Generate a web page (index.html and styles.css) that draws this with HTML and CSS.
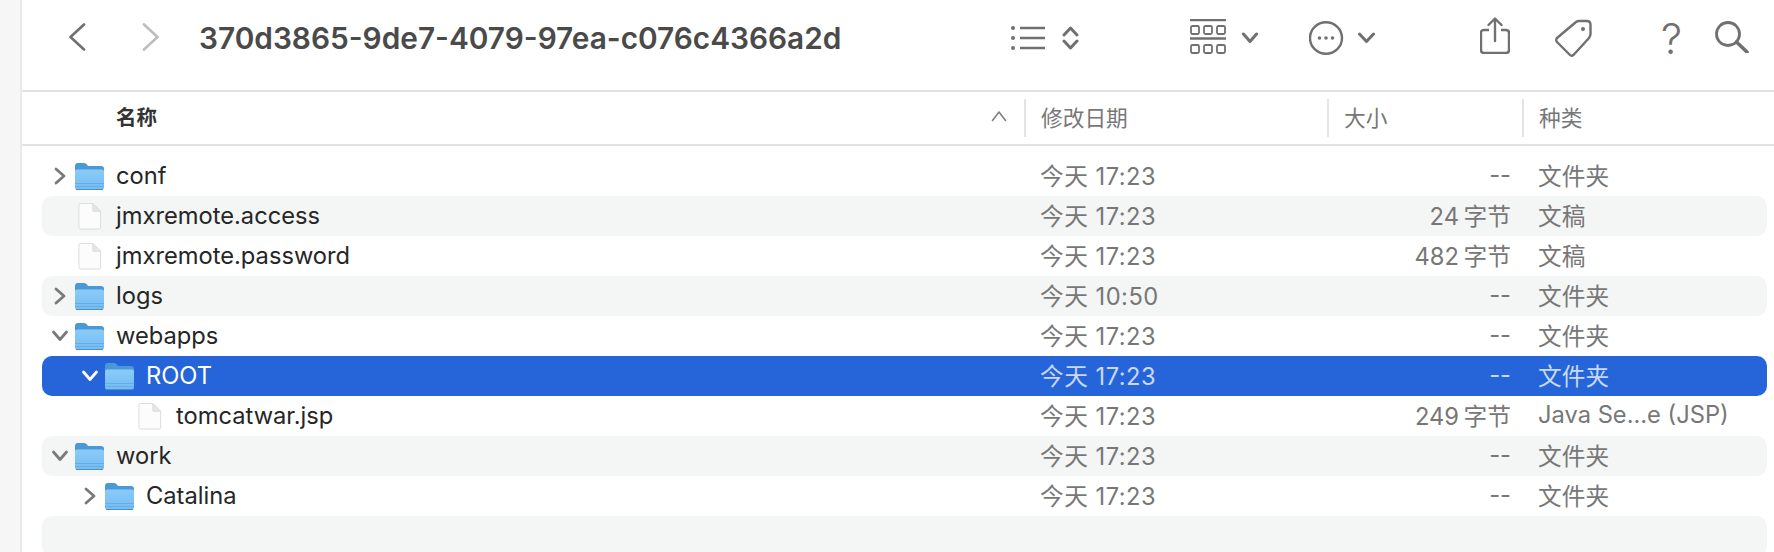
FILE: index.html
```html
<!DOCTYPE html>
<html lang="zh-CN">
<head>
    <meta charset="UTF-8">
    <title>370d3865-9de7-4079-97ea-c076c4366a2d</title>
    <link rel="stylesheet" href="styles.css">
</head>
<body>
    <svg class="defs" width="0" height="0">
        <defs>
            <linearGradient id="folder-body" x1="0" y1="0" x2="0" y2="1">
                <stop offset="0" stop-color="#8acbf8"/>
                <stop offset="1" stop-color="#74bcf2"/>
            </linearGradient>
            <symbol id="folder" viewBox="0 0 29 27">
                <path d="M0 3 Q0 0 3 0 H9 Q11 0 12 1.500 L13 3 H26 Q29 3 29 6 V12 H0 Z" fill="#4a98d6"/>
                <path d="M0 8 Q0 6.500 2 6.500 H27 Q29 6.500 29 8 V24 Q29 27 26 27 H3 Q0 27 0 24 Z" fill="url(#folder-body)"/>
                <path d="M0 20.500 H29 M0 23.500 H29" stroke="#68aee6" stroke-width="1"/>
                <path d="M1 26.500 H28" stroke="#4e8fc6" stroke-width="1"/>
            </symbol>
            <symbol id="file" viewBox="0 0 25 28">
                <path d="M1.500 2 Q1.500 .5 3 .5 H16 L24 8.500 V25.500 Q24 27 22.500 27 H3 Q1.500 27 1.500 25.500 Z" fill="#fcfcfc" stroke="#dcdcdc"/>
                <path d="M16 .5 V8.500 H24 Z" fill="#e6e6e6" stroke="#dcdcdc"/>
            </symbol>
            <symbol id="chev-right" viewBox="0 0 12 18">
                <path d="M2 2 L10 9 L2 16" fill="none" stroke="currentColor" stroke-width="2.800" stroke-linecap="round" stroke-linejoin="round"/>
            </symbol>
            <symbol id="chev-down" viewBox="0 0 18 12">
                <path d="M2.500 2 L9 9.500 L15.500 2" fill="none" stroke="currentColor" stroke-width="2.800" stroke-linecap="round" stroke-linejoin="round"/>
            </symbol>
        </defs>
    </svg>

    <div class="sidebar"></div>
    <div class="main">
        <div class="toolbar">
            <svg class="nav-back" width="18" height="28" viewBox="0 0 18 28"><path d="M16 1.500 L2.500 14 L16 26.500" fill="none" stroke="#707070" stroke-width="2.600" stroke-linecap="round" stroke-linejoin="round"/></svg>
            <svg class="nav-forward" width="18" height="28" viewBox="0 0 18 28"><path d="M2 1.500 L15.500 14 L2 26.500" fill="none" stroke="#bdbdbd" stroke-width="2.600" stroke-linecap="round" stroke-linejoin="round"/></svg>
            <div class="title">370d3865-9de7-4079-97ea-c076c4366a2d</div>

            <svg class="tool tool-list" width="68" height="26" viewBox="0 0 68 26">
                <g fill="#707070"><circle cx="2" cy="3" r="2"/><circle cx="2" cy="13" r="2"/><circle cx="2" cy="23" r="2"/></g>
                <path d="M9 3 H34 M9 13 H34 M9 23 H34" stroke="#707070" stroke-width="2.600" fill="none"/>
                <path d="M53 10 L59.500 3 L66 10 M53 16 L59.500 23 L66 16" stroke="#707070" stroke-width="3" fill="none" stroke-linecap="round" stroke-linejoin="round"/>
            </svg>
            <svg class="tool tool-grid" width="68" height="36" viewBox="0 0 68 36">
                <g fill="none" stroke="#707070">
                    <path d="M0 1 H36 M0 19.500 H36" stroke-width="2.600"/>
                    <g stroke-width="1.800">
                        <rect x="1" y="7" width="8" height="8" rx="1.500"/><rect x="14" y="7" width="8" height="8" rx="1.500"/><rect x="27" y="7" width="8" height="8" rx="1.500"/>
                        <rect x="1" y="26" width="8" height="8" rx="1.500"/><rect x="14" y="26" width="8" height="8" rx="1.500"/><rect x="27" y="26" width="8" height="8" rx="1.500"/>
                    </g>
                    <path d="M53.500 15 L60 22.500 L66.500 15" stroke-width="3" stroke-linecap="round" stroke-linejoin="round"/>
                </g>
            </svg>
            <svg class="tool tool-more" width="66" height="34" viewBox="0 0 66 34">
                <ellipse cx="17" cy="17" rx="16" ry="15.800" fill="none" stroke="#707070" stroke-width="2.400"/>
                <g fill="#707070"><circle cx="10.500" cy="17" r="1.800"/><circle cx="17" cy="17" r="1.800"/><circle cx="23.500" cy="17" r="1.800"/></g>
                <path d="M50.500 13 L57.500 20.500 L64.500 13" stroke="#707070" stroke-width="3" fill="none" stroke-linecap="round" stroke-linejoin="round"/>
            </svg>
            <svg class="tool tool-share" width="30" height="37" viewBox="0 0 30 37">
                <path d="M9 13 H4 Q1 13 1 16 V33 Q1 36 4 36 H26 Q29 36 29 33 V16 Q29 13 26 13 H21" fill="none" stroke="#707070" stroke-width="2.400"/>
                <path d="M15 24 V2 M8.500 8 L15 1.500 L21.500 8" fill="none" stroke="#707070" stroke-width="2.400" stroke-linecap="round" stroke-linejoin="round"/>
            </svg>
            <svg class="tool tool-tag" width="37" height="38" viewBox="0 0 37 38">
                <path d="M24 2 H32 Q35.500 2 35.500 6 V15 Q35.500 17 34 19 L18.500 36 Q16.500 37.500 15 36 L2 23 Q.5 21 2 19 L21 3 Q22.500 2 24 2 Z" fill="none" stroke="#707070" stroke-width="2.400" stroke-linejoin="round"/>
                <circle cx="28" cy="10" r="2" fill="#707070"/>
            </svg>
            <div class="help">?</div>
            <svg class="tool tool-search" width="34" height="32" viewBox="0 0 34 32">
                <ellipse cx="13" cy="13" rx="11.500" ry="11.500" fill="none" stroke="#707070" stroke-width="2.800"/>
                <path d="M21.500 21 L32 31" stroke="#707070" stroke-width="3.600" stroke-linecap="round"/>
            </svg>
        </div>

        <div class="list-header">
            <div class="col-head col-name">名称<svg class="sort-caret" width="16" height="12" viewBox="0 0 16 12"><path d="M1.500 10.500 L8 2 L14.500 10.500" fill="none" stroke="#808080" stroke-width="1.600" stroke-linecap="round" stroke-linejoin="round"/></svg></div>
            <div class="col-head col-date">修改日期</div>
            <div class="col-head col-size">大小</div>
            <div class="col-head col-kind">种类</div>
        </div>

        <div class="rows">
            <div class="row">
                <div class="name"><svg class="disc-right"><use href="#chev-right"/></svg><svg class="icon"><use href="#folder"/></svg><span>conf</span></div>
                <div class="date">今天 17:23</div><div class="size">--</div><div class="kind">文件夹</div>
            </div>
            <div class="row stripe">
                <div class="name"><span class="disc"></span><svg class="icon"><use href="#file"/></svg><span>jmxremote.access</span></div>
                <div class="date">今天 17:23</div><div class="size">24 字节</div><div class="kind">文稿</div>
            </div>
            <div class="row">
                <div class="name"><span class="disc"></span><svg class="icon"><use href="#file"/></svg><span>jmxremote.password</span></div>
                <div class="date">今天 17:23</div><div class="size">482 字节</div><div class="kind">文稿</div>
            </div>
            <div class="row stripe">
                <div class="name"><svg class="disc-right"><use href="#chev-right"/></svg><svg class="icon"><use href="#folder"/></svg><span>logs</span></div>
                <div class="date">今天 10:50</div><div class="size">--</div><div class="kind">文件夹</div>
            </div>
            <div class="row">
                <div class="name"><svg class="disc-down"><use href="#chev-down"/></svg><svg class="icon"><use href="#folder"/></svg><span>webapps</span></div>
                <div class="date">今天 17:23</div><div class="size">--</div><div class="kind">文件夹</div>
            </div>
            <div class="row selected">
                <div class="name level-1"><svg class="disc-down"><use href="#chev-down"/></svg><svg class="icon"><use href="#folder"/></svg><span>ROOT</span></div>
                <div class="date">今天 17:23</div><div class="size">--</div><div class="kind">文件夹</div>
            </div>
            <div class="row">
                <div class="name level-2"><span class="disc"></span><svg class="icon"><use href="#file"/></svg><span>tomcatwar.jsp</span></div>
                <div class="date">今天 17:23</div><div class="size">249 字节</div><div class="kind">Java Se...e (JSP)</div>
            </div>
            <div class="row stripe">
                <div class="name"><svg class="disc-down"><use href="#chev-down"/></svg><svg class="icon"><use href="#folder"/></svg><span>work</span></div>
                <div class="date">今天 17:23</div><div class="size">--</div><div class="kind">文件夹</div>
            </div>
            <div class="row">
                <div class="name level-1"><svg class="disc-right"><use href="#chev-right"/></svg><svg class="icon"><use href="#folder"/></svg><span>Catalina</span></div>
                <div class="date">今天 17:23</div><div class="size">--</div><div class="kind">文件夹</div>
            </div>
            <div class="row stripe"></div>
        </div>
    </div>
</body>
</html>
```
FILE: styles.css
```css
html, body {
    height: 552px;
    overflow: hidden;
}
body {
    margin: 0;
    display: flex;
    background-color: white;
    font-family: Inter, "Noto Sans CJK SC", sans-serif;
    font-size: 23.7px;
    color: #262626;
}
.defs {
    position: absolute;
}
.sidebar {
    width: 20px;
    background-color: #f6f6f6;
    border-right: 2px solid #e9e9e9;
}
.main {
    flex: 1;
    min-width: 0;
}

/* toolbar */
.toolbar {
    height: 90px;
    display: flex;
    align-items: center;
    border-bottom: 2px solid #e2e2e2;
    padding-left: 46px;
}
.nav-back {
    margin-top: -16px;
}
.nav-forward {
    margin-left: 56px;
    margin-top: -16px;
}
.title {
    margin-left: 39px;
    width: 642px;
    margin-top: -15px;
    font-size: 29.8px;
    font-weight: 600;
    color: #4a4a4a;
    white-space: nowrap;
}
.tool {
    flex-shrink: 0;
}
.tool-list {
    margin-left: 170px;
    margin-top: -15px;
}
.tool-grid {
    margin-left: 111px;
    margin-top: -17px;
}
.tool-more {
    margin-left: 51px;
    margin-top: -15px;
}
.tool-share {
    margin-left: 105px;
    margin-top: -20px;
}
.tool-tag {
    margin-left: 45px;
    margin-top: -15px;
}
.help {
    margin-left: 69px;
    margin-top: -13px;
    font-size: 42px;
    font-weight: 300;
    line-height: 42px;
    color: #707070;
}
.tool-search {
    margin-left: 33px;
    margin-top: -17px;
}

/* column headers */
.list-header {
    height: 54px;
    display: flex;
    align-items: center;
    border-bottom: 2px solid #e2e2e2;
    box-sizing: border-box;
}
.col-head {
    height: 38px;
    display: flex;
    align-items: center;
    box-sizing: border-box;
    padding-bottom: 4px;
    color: #777;
    border-left: 2px solid #e4e4e4;
    padding-left: 15px;
    font-size: 21.7px;
}
.col-name {
    width: 1002px;
    border-left: none;
    padding-left: 94px;
    color: #333;
    font-weight: 600;
    font-size: 20.5px;
    justify-content: space-between;
    padding-right: 17px;
}
.col-date {
    width: 303px;
}
.col-size {
    width: 195px;
}
.col-kind {
    flex: 1;
}

/* rows */
.rows {
    padding: 10px 7px 0 20px;
}
.row {
    height: 40px;
    display: grid;
    grid-template-columns: 998px 317px 154px 1fr;
    align-items: center;
    border-radius: 10px;
    white-space: nowrap;
}
.stripe {
    background-color: #f4f5f5;
}
.selected {
    background-color: #2565d9;
    color: white;
}
.name {
    display: flex;
    align-items: center;
    padding-left: 12px;
}
.name span {
    padding-bottom: 2px;
}
.level-1 {
    padding-left: 42px;
}
.level-2 {
    padding-left: 72px;
}
.disc, .disc-right, .disc-down {
    width: 21px;
    flex-shrink: 0;
    color: #7a7a7a;
}
.disc-right {
    height: 18px;
    width: 12px;
    margin-right: 9px;
}
.disc-down {
    height: 12px;
    width: 18px;
    margin-left: -3px;
    margin-right: 6px;
}
.selected .disc-down {
    color: white;
}
.icon {
    width: 29px;
    height: 27px;
    margin-right: 12px;
    flex-shrink: 0;
}
.date, .size, .kind {
    color: #777;
    padding-bottom: 3px;
}
.date {
    letter-spacing: .5px;
}
.size {
    text-align: right;
    word-spacing: -2px;
}
.kind {
    padding-left: 27px;
}
.selected .date, .selected .size, .selected .kind {
    color: #c9d9f6;
}
```
